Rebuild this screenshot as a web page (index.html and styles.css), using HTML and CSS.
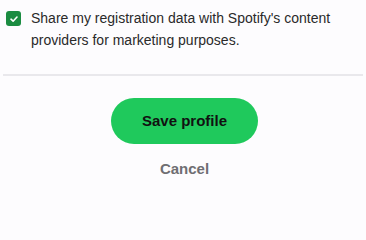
FILE: index.html
```html
<!DOCTYPE html>
<html>
<head>
<meta charset="utf-8">
<link rel="stylesheet" href="styles.css">
</head>
<body>
<div class="page">
  <label class="consent">
    <span class="box">
      <svg width="10" height="10" viewBox="0 0 10 10"><path d="M2 5.2 L4.1 7.2 L8 3" fill="none" stroke="#fff" stroke-width="1.6" stroke-linecap="round" stroke-linejoin="round"/></svg>
    </span>
    <span class="text">Share my registration data with Spotify's content providers for marketing purposes.</span>
  </label>
  <hr class="divider">
  <div class="actions">
    <button class="save">Save profile</button>
    <button class="cancel">Cancel</button>
  </div>
</div>
</body>
</html>
```
FILE: styles.css
```css
html, body { margin: 0; padding: 0; background: #fdfcfe; }
body { width: 366px; height: 216px; overflow: hidden; font-family: "Liberation Sans", Arial, sans-serif; }
.page { padding: 0 3px; }
.consent { display: flex; align-items: flex-start; gap: 10px; padding: 7px 0 0 3px; }
.box { flex: none; width: 15px; height: 15px; margin-top: 4px; border-radius: 3px; background: #1b8c41; display: flex; align-items: center; justify-content: center; }
.text { font-size: 14px; line-height: 22px; color: #2a2a2a; width: 325px; }
.divider { border: 0; height: 1.5px; background: #e9e8ec; margin: 23px 0 0; }
.actions { display: flex; flex-direction: column; align-items: center; padding-top: 22px; }
.save { width: 147px; height: 46px; border: 0; border-radius: 23px; background: #1fc95c; color: #111; font: bold 15px "Liberation Sans", Arial, sans-serif; margin-left: 3px; }
.cancel { border: 0; background: none; padding: 0; margin-top: 16px; color: #6f6e72; font: bold 15px "Liberation Sans", Arial, sans-serif; margin-left: 3px; }
```
